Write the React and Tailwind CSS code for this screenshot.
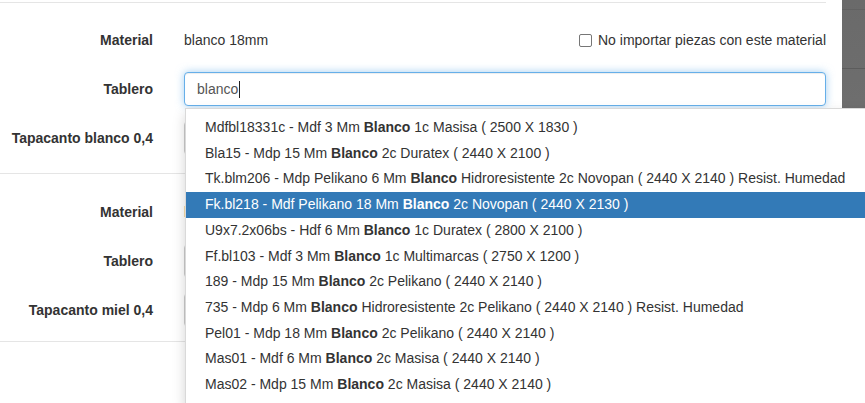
import React from "react";

const font = { fontFamily: '"Liberation Sans", Arial, sans-serif' };

const options = [
  ["Mdfbl18331c - Mdf 3 Mm ", " 1c Masisa ( 2500 X 1830 )"],
  ["Bla15 - Mdp 15 Mm ", " 2c Duratex ( 2440 X 2100 )"],
  ["Tk.blm206 - Mdp Pelikano 6 Mm ", " Hidroresistente 2c Novopan ( 2440 X 2140 ) Resist. Humedad"],
  ["Fk.bl218 - Mdf Pelikano 18 Mm ", " 2c Novopan ( 2440 X 2130 )"],
  ["U9x7.2x06bs - Hdf 6 Mm ", " 1c Duratex ( 2800 X 2100 )"],
  ["Ff.bl103 - Mdf 3 Mm ", " 1c Multimarcas ( 2750 X 1200 )"],
  ["189 - Mdp 15 Mm ", " 2c Pelikano ( 2440 X 2140 )"],
  ["735 - Mdp 6 Mm ", " Hidroresistente 2c Pelikano ( 2440 X 2140 ) Resist. Humedad"],
  ["Pel01 - Mdp 18 Mm ", " 2c Pelikano ( 2440 X 2140 )"],
  ["Mas01 - Mdf 6 Mm ", " 2c Masisa ( 2440 X 2140 )"],
  ["Mas02 - Mdp 15 Mm ", " 2c Masisa ( 2440 X 2140 )"],
];

function Row({ label, children, className = "" }) {
  return (
    <div className={`flex h-[34px] items-center ${className}`}>
      <div className="w-[169px] pr-[16px] text-right text-[14px] font-bold text-[#333]">{label}</div>
      <div className="flex h-full flex-1 items-center pl-[15px] pr-[16px]">{children}</div>
    </div>
  );
}

function PlainInput() {
  return <div className="h-[34px] w-full rounded-[4px] border border-[#ccc] bg-white" />;
}

export default function App() {
  return (
    <div className="relative flex h-[403px] w-[865px] overflow-hidden bg-white" style={font}>
      {/* modal body */}
      <div className="w-[842px] shrink-0 bg-white">
        <div className="mt-[2px] mr-[16px] border-t border-[#e5e5e5]" />

        <Row label="Material" className="mt-[20px]">
          <span className="text-[14px] text-[#333]">blanco 18mm</span>
          <label className="ml-auto flex items-center gap-[6px] text-[14px] text-[#333]">
            <span className="h-[13px] w-[13px] rounded-[2px] border border-[#767676] bg-white" />
            No importar piezas con este material
          </label>
        </Row>

        <Row label="Tablero" className="mt-[15px]">
          <div className="flex h-[34px] w-full items-center rounded-[4px] border border-[#66afe9] bg-white px-[12px] text-[14px] text-[#555] shadow-[inset_0_1px_1px_rgba(0,0,0,0.075),0_0_8px_rgba(102,175,233,0.6)]">
            blanco
            <span className="ml-[1px] inline-block h-[17px] w-px bg-[#222]" />
          </div>
        </Row>

        <Row label="Tapacanto blanco 0,4" className="mt-[15px]">
          <PlainInput />
        </Row>

        <div className="mt-[18px] mr-[16px] border-t border-[#e5e5e5]" />

        <Row label="Material" className="mt-[21px]">
          <span className="text-[14px] text-[#333]">blanco 18mm</span>
        </Row>

        <Row label="Tablero" className="mt-[15px]">
          <PlainInput />
        </Row>

        <Row label="Tapacanto miel 0,4" className="mt-[15px]">
          <PlainInput />
        </Row>

        <div className="mt-[14px] mr-[16px] border-t border-[#e5e5e5]" />
      </div>

      {/* backdrop strip beside the modal */}
      <div className="flex flex-1 flex-col bg-gradient-to-b from-[#6a6a6a] to-[#7a7a7a]">
        <div className="h-[10px] border-b border-[#626262]" />
        <div className="h-[59px] border-b border-[#5c5c5c]" />
      </div>

      {/* typeahead dropdown */}
      <ul className="absolute left-[185px] top-[108px] w-[700px] border border-[rgba(0,0,0,0.15)] bg-white pt-[6px] pb-[5px] shadow-[0_6px_12px_rgba(0,0,0,0.175)]">
        {options.map(([before, after], i) => {
          const active = i === 3;
          return (
            <li
              key={i}
              className={`whitespace-nowrap px-[19px] py-[3px] text-[14px] leading-[19.7px] ${
                active ? "bg-[#337ab7] text-white" : "text-[#333]"
              }`}
            >
              {before}
              <strong className="font-bold">Blanco</strong>
              {after}
            </li>
          );
        })}
      </ul>
    </div>
  );
}
